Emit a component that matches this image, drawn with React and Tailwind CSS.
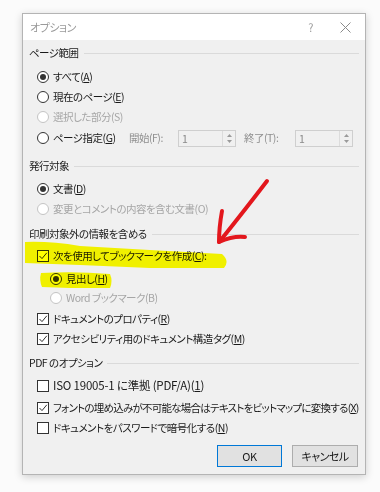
import React from "react";

const FONT = "font-['Noto_Sans_CJK_JP','Noto_Sans',sans-serif]";

function Radio({ checked, disabled }) {
  return (
    <span
      className={`flex items-center justify-center w-[12px] h-[12px] rounded-full border shrink-0 bg-white ${
        disabled ? "border-[#c4c4c4]" : "border-[#333333]"
      }`}
    >
      {checked && <span className="w-[6px] h-[6px] rounded-full bg-[#333333]" />}
    </span>
  );
}

function Checkbox({ checked }) {
  return (
    <span className="flex items-center justify-center w-[12px] h-[12px] border border-[#333333] bg-white shrink-0">
      {checked && (
        <svg width="10" height="10" viewBox="0 0 10 10">
          <path d="M1.5 5 L4 7.6 L8.8 1.8" fill="none" stroke="#333" strokeWidth="1" />
        </svg>
      )}
    </span>
  );
}

function Heading({ children, className = "" }) {
  return (
    <div className={`flex items-center h-[20px] gap-[5px] ${className}`}>
      <span className="text-[#1a1a1a] whitespace-nowrap">{children}</span>
      <div className="flex-1 h-px bg-[#dadada]" />
    </div>
  );
}

function Row({ control, children, disabled, indent = "pl-[8px]", className = "", h = "h-[20px]", textClass = "" }) {
  return (
    <div className={`flex items-center ${h} ${indent} gap-[4px] ${className}`}>
      {control}
      <span className={`whitespace-nowrap ${textClass} ${disabled ? "text-[#a6a6a6]" : "text-[#1a1a1a]"}`}>
        {children}
      </span>
    </div>
  );
}

function Spinner() {
  return (
    <div className="flex w-[58px] h-[17px] border border-[#cfcfcf] bg-[#f0f0f0]">
      <span className="flex-1 pl-[3px] text-[#8a8a8a] leading-[15px]">1</span>
      <div className="w-[13px] border-l border-[#dcdcdc] flex flex-col items-center justify-center gap-[3px]">
        <svg width="5" height="3" viewBox="0 0 5 3">
          <path d="M0 3 L2.5 0 L5 3 Z" fill="#9a9a9a" />
        </svg>
        <svg width="5" height="3" viewBox="0 0 5 3">
          <path d="M0 0 L2.5 3 L5 0 Z" fill="#9a9a9a" />
        </svg>
      </div>
    </div>
  );
}

export default function App() {
  return (
    <div
      className={`relative w-[380px] h-[492px] bg-[#fbfbfb] pt-[13px] pl-[22px] overflow-hidden ${FONT} text-[10.5px] tracking-[-0.5px] [font-feature-settings:'palt']`}
    >
      <div className="w-[344px] h-[462px] border border-[#b4b4b4] shadow-[0_2px_8px_rgba(0,0,0,0.18)] flex flex-col bg-[#f0f0f0]">
        {/* title bar */}
        <div className="h-[26px] bg-white flex items-center pl-[7px] pr-[14px] shrink-0">
          <span className="text-[#9a9a9a] text-[11px]">オプション</span>
          <span className="ml-auto text-[#9a9a9a] text-[11px] mr-[27px]">?</span>
          <svg width="11" height="11" viewBox="0 0 11 11">
            <path d="M0.5 0.5 L10.5 10.5 M10.5 0.5 L0.5 10.5" stroke="#8a8a8a" strokeWidth="1" />
          </svg>
        </div>

        {/* body */}
        <div className="flex flex-col pl-[6px] pr-[6px] pt-[3px]">
          <Heading>ページ範囲</Heading>
          <Row className="mt-[4px]" control={<Radio checked />}>
            すべて(<u>A</u>)
          </Row>
          <Row control={<Radio />}>
            現在のページ(<u>E</u>)
          </Row>
          <Row control={<Radio disabled />} disabled>
            選択した部分(S)
          </Row>
          <div className="flex items-center h-[22px] pl-[8px]">
            <div className="flex items-center gap-[4px] w-[92px]">
              <Radio />
              <span className="whitespace-nowrap text-[#1a1a1a]">
                ページ指定(<u>G</u>)
              </span>
            </div>
            <span className="text-[#8f8f8f] whitespace-nowrap w-[49px]">開始(F):</span>
            <Spinner />
            <span className="text-[#8f8f8f] whitespace-nowrap ml-[8px] w-[51px]">終了(T):</span>
            <Spinner />
          </div>

          <Heading className="mt-[7px]">発行対象</Heading>
          <Row className="mt-[3px]" control={<Radio checked />}>
            文書(<u>D</u>)
          </Row>
          <Row control={<Radio disabled />} disabled>
            変更とコメントの内容を含む文書(O)
          </Row>

          <Heading className="mt-[5px]">印刷対象外の情報を含める</Heading>
          <Row className="mt-[2px]" control={<Checkbox checked />}>
            次を使用してブックマークを作成(<u>C</u>):
          </Row>
          <Row className="mt-[3px]" indent="pl-[21px]" control={<Radio checked />}>
            見出し(<u>H</u>)
          </Row>
          <Row h="h-[18px]" indent="pl-[21px]" control={<Radio disabled />} disabled>
            Word ブックマーク(B)
          </Row>
          <Row className="mt-[2px]" control={<Checkbox checked />}>
            ドキュメントのプロパティ(<u>R</u>)
          </Row>
          <Row control={<Checkbox checked />}>
            アクセシビリティ用のドキュメント構造タグ(<u>M</u>)
          </Row>

          <Heading className="mt-[4px]">PDF のオプション</Heading>
          <Row className="mt-[3px]" control={<Checkbox />} textClass="text-[11.5px] tracking-[-0.2px]">
            ISO 19005-1 に準拠 (PDF/A)(<u>1</u>)
          </Row>
          <Row className="mt-[2px]" control={<Checkbox checked />} textClass="tracking-[-0.75px]">
            フォントの埋め込みが不可能な場合はテキストをビットマップに変換する(<u>X</u>)
          </Row>
          <Row control={<Checkbox />}>
            ドキュメントをパスワードで暗号化する(<u>N</u>)
          </Row>

          <div className="flex justify-end gap-[10px] mt-[7px] pr-[1px]">
            <button className="w-[65px] h-[22px] border border-[#0078d7] bg-[#e1e1e1] text-[#1a1a1a] text-[11px]">
              OK
            </button>
            <button className="w-[66px] h-[22px] border border-[#adadad] bg-[#e1e1e1] text-[#1a1a1a] text-[11px]">
              キャンセル
            </button>
          </div>
        </div>
      </div>

      {/* annotations */}
      <svg
        className="absolute left-0 top-0 pointer-events-none mix-blend-multiply"
        width="380"
        height="492"
        viewBox="0 0 380 492"
      >
        <path
          d="M25 242 Q50 241 80 246 L150 250 L222 254 Q230 261 224 268 L150 268 L80 265 L25 263 Z"
          fill="#ffff00"
        />
        <path d="M41 273 Q75 271 110 274 Q113 281 110 288 L70 288 L42 287 Q39 280 41 273 Z" fill="#ffff00" />
      </svg>
      <svg
        className="absolute left-0 top-0 pointer-events-none"
        width="380"
        height="492"
        viewBox="0 0 380 492"
      >
        <g fill="none" stroke="#e3171d" strokeWidth="4" strokeLinecap="round" strokeLinejoin="round">
          <path d="M267 181 C254 198 236 221 220 241" />
          <path d="M222 211 C220 222 219 232 219 242" />
          <path d="M219 242 C228 238 237 236 245 237" />
        </g>
      </svg>
    </div>
  );
}
